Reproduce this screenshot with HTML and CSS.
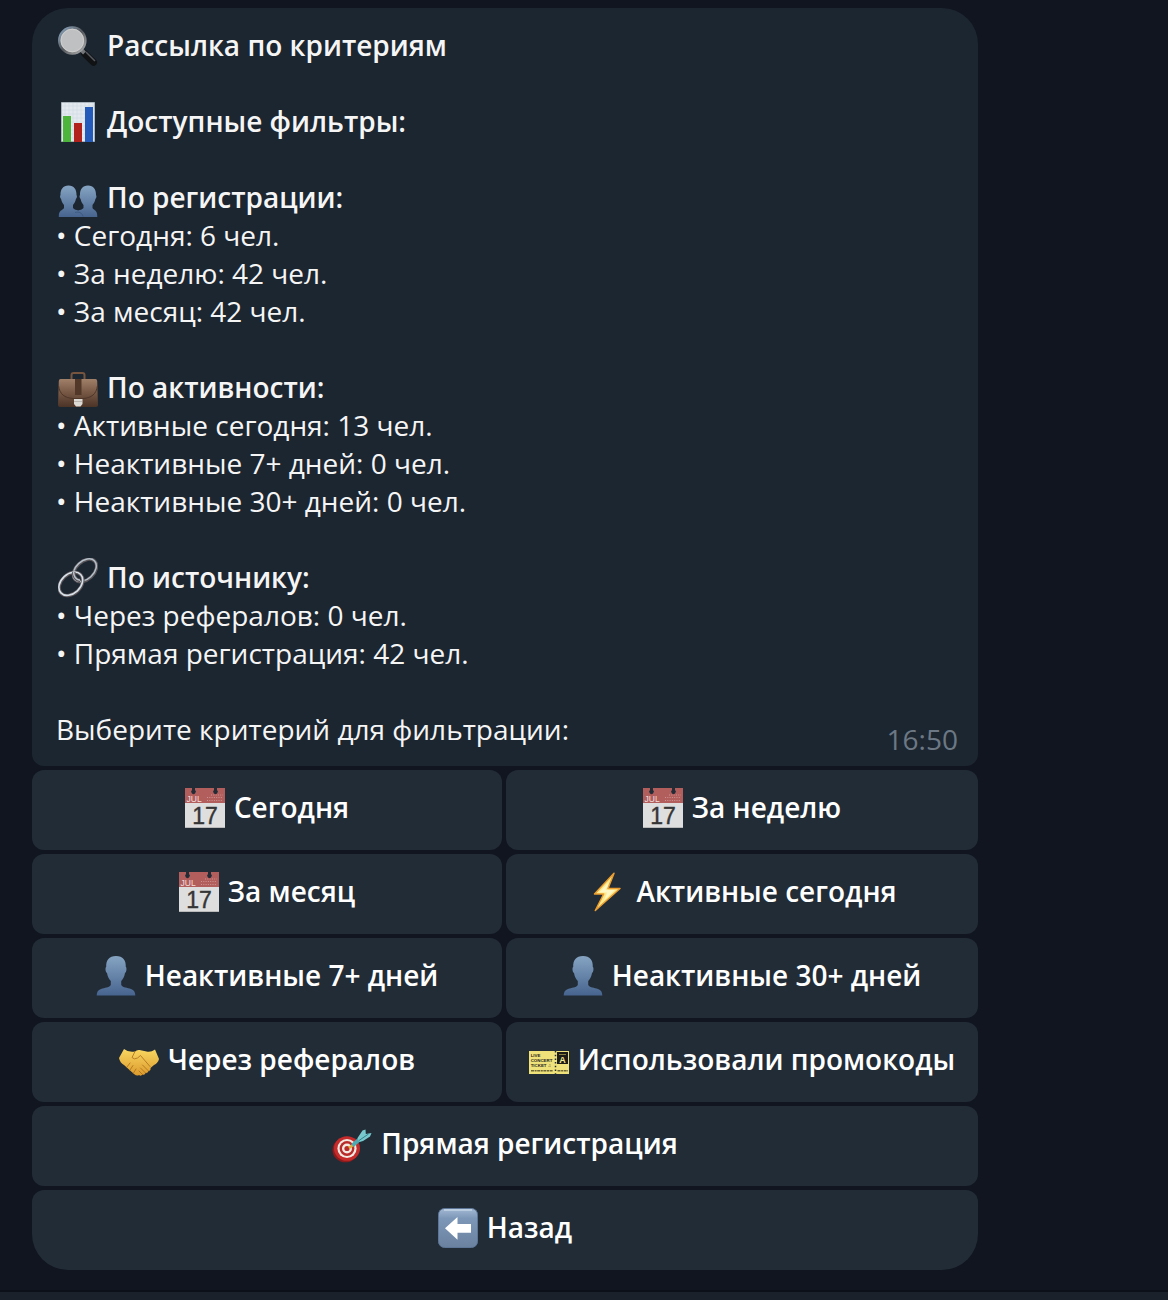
FILE: index.html
```html
<!DOCTYPE html>
<html lang="ru">
<head>
<meta charset="utf-8">
<meta name="viewport" content="width=device-width, initial-scale=1">
<title>Рассылка по критериям</title>
<link rel="stylesheet" href="styles.css">
</head>
<body>
<svg class="defs" aria-hidden="true">
  <defs>
    <linearGradient id="blue" x1="0" y1="0" x2="0" y2="1"><stop offset="0" stop-color="#86a4c2"/><stop offset="1" stop-color="#47648f"/></linearGradient>
    <linearGradient id="metal" x1="0" y1="0" x2="1" y2="1"><stop offset="0" stop-color="#8faac4"/><stop offset=".5" stop-color="#55585c"/><stop offset="1" stop-color="#b5b5b5"/></linearGradient>
    <linearGradient id="leather" x1="0" y1="0" x2="0" y2="1"><stop offset="0" stop-color="#a18069"/><stop offset=".5" stop-color="#765744"/><stop offset="1" stop-color="#4b3326"/></linearGradient>
    <linearGradient id="gold" x1="0" y1="0" x2="0" y2="1"><stop offset="0" stop-color="#f9d761"/><stop offset="1" stop-color="#dc9a2c"/></linearGradient>
    <linearGradient id="key" x1="0" y1="0" x2="0" y2="1"><stop offset="0" stop-color="#a4bad4"/><stop offset=".25" stop-color="#7d97b8"/><stop offset="1" stop-color="#6b829f"/></linearGradient>
    <symbol id="calendar" viewBox="0 0 40 40">
      <path fill="#dedede" d="M0 0h40v40H0z"/>
      <path fill="#b25e5d" d="M0 0h40v15H0z"/>
      <path fill="#222c37" d="M7 0h3v2a2.300 2.300 0 1 1-3 0zM29 0h3v2a2.300 2.300 0 1 1-3 0z"/>
      <text class="glyph" x="1.500" y="13.500" font-size="8.500" fill="#f3dede">JUL</text>
      <path stroke="#cf9492" stroke-width="1.200" stroke-dasharray="1 1.300" d="M22 9.500h16M22 12.500h16M26 7h12"/>
      <path stroke="#b9b9b9" d="M0 39.500h40"/>
      <text class="glyph" x="20" y="35.500" font-size="23" text-anchor="middle" fill="#353535" stroke="#353535" stroke-width=".4">17</text>
    </symbol>
    <symbol id="person" viewBox="0 0 40 40">
      <path fill="url(#blue)" d="M20 0c7 0 10 4 9.800 11 1 0 1 5-.8 6-.7 4-2 6-3.800 8v4c2 3 6 2.500 9.800 4 3 1.200 4.200 3 4.300 6.400H.7C.8 36 2 34.200 5 33c3.800-1.500 7.800-1 9.800-4v-4C13 23 11.700 21 11 17c-1.800-1-1.800-6-.8-6C10 4 13 0 20 0z"/>
    </symbol>
  </defs>
</svg>

<main class="chat">
  <article class="message">
    <h1 class="heading">
      <svg class="icon" viewBox="0 0 40 40" aria-hidden="true"><path d="M26.500 27.500l9 8.700" stroke="#111214" stroke-width="7" stroke-linecap="round"/><path d="M28 26l9 9" stroke="#56595d" stroke-width="1.500"/><path d="M23.500 24l3 3" stroke="#74777a" stroke-width="4"/><circle cx="14.300" cy="14.500" r="13" fill="#bfc0c2" stroke="url(#metal)" stroke-width="2.600"/><circle cx="14.300" cy="14.500" r="11.300" fill="none" stroke="#d4d3d1" stroke-width=".8"/></svg>
      Рассылка по критериям
    </h1>

    <h2 class="heading spaced">
      <svg class="icon" viewBox="0 0 40 40" aria-hidden="true"><path fill="#e3e9ef" stroke="#a9b4bd" stroke-width="1" d="M3.500.5h33v39h-33z"/><path stroke="#cbd4de" stroke-width=".5" d="M7 1v38M11 1v38M15 1v38M19 1v38M23 1v38M27 1v38M31 1v38M35 1v38M4 4h32M4 8h32M4 12h32M4 16h32M4 20h32M4 24h32M4 28h32M4 32h32M4 36h32"/><path fill="#4db53b" d="M5 14h8v26H5z"/><path fill="#b2221c" d="M16 21h8v19h-8z"/><path fill="#245bbb" d="M27 5h8v35h-8z"/></svg>
      Доступные фильтры:
    </h2>

    <section class="spaced">
      <h2 class="heading">
        <svg class="icon" viewBox="0 0 40 40" aria-hidden="true"><path fill="url(#blue)" d="M10.500 7.500c5.500 0 8.200 4 8 9.500.8 1 .5 3-.6 4-.6 3-1.600 4-2.900 6v3c1.300 1.800 3.200 1.800 5.200 2.600 2-.8 3.900-.8 5.300-2.600v-3c-1.300-2-2.300-3-2.900-6-1.100-1-1.400-3-.6-4-.2-5.500 2.500-9.500 8-9.500s8.200 4 8 9.500c.8 1 .5 3-.6 4-.6 3-1.600 4-2.900 6v3c1.800 3 4.800 1.500 4.800 9H.8c0-7.500 3.400-6 5.200-9v-3c-1.300-2-2.300-3-2.900-6-1.100-1-1.400-3-.6-4-.2-5.500 2.500-9.500 8-9.500z"/><path fill="none" stroke="#35517a" stroke-width=".7" d="M17 34.500c4-1 7 0 8 4"/></svg>
        По регистрации:
      </h2>
      <ul class="stats">
        <li>• Сегодня: 6 чел.</li>
        <li>• За неделю: 42 чел.</li>
        <li>• За месяц: 42 чел.</li>
      </ul>
    </section>

    <section class="spaced">
      <h2 class="heading">
        <svg class="icon" viewBox="0 0 40 40" aria-hidden="true"><path fill="none" stroke="#76543e" stroke-width="2" d="M13.500 11V7q0-2 2-2h9q2 0 2 2v4"/><path fill="url(#leather)" d="M2.500 11h35Q39 11 39.200 13L40 37q0 2-2 2H2q-2 0-2-2L.8 13Q1 11 2.500 11z"/><path fill="none" stroke="#4e3628" stroke-width="1" d="M.6 18c1 8 6 12 14.400 12.500h10c8.400-.5 13.400-4.500 14.400-12.500"/><path fill="#513829" d="M17 11h6.500v16H17z"/><path fill="#ddd9d4" d="M16 31h8.500v5l-2 2.500h-4.500l-2-2.500z"/><path stroke="#98918a" stroke-width=".5" d="M16 33.500h8.500"/></svg>
        По активности:
      </h2>
      <ul class="stats">
        <li>• Активные сегодня: 13 чел.</li>
        <li>• Неактивные 7+ дней: 0 чел.</li>
        <li>• Неактивные 30+ дней: 0 чел.</li>
      </ul>
    </section>

    <section class="spaced">
      <h2 class="heading">
        <svg class="icon" viewBox="0 0 40 40" aria-hidden="true"><g fill="none"><ellipse cx="27" cy="12.500" rx="13.500" ry="9" transform="rotate(-43 27 12.500)" stroke="#5a5558" stroke-width="3.400"/><ellipse cx="26.700" cy="12.200" rx="13.500" ry="9" transform="rotate(-43 26.700 12.200)" stroke="#b4bfca" stroke-width="1.500"/><ellipse cx="13" cy="26" rx="13.500" ry="9.700" transform="rotate(-43 13 26)" stroke="#5d5659" stroke-width="3.400"/><ellipse cx="12.800" cy="25.700" rx="13.500" ry="9.700" transform="rotate(-43 12.800 25.700)" stroke="#d7e1e9" stroke-width="1.600"/><path d="M15.700 14q.2 8 6.500 8.500" stroke="#5a5558" stroke-width="3.400"/><path d="M15.500 13.500q.3 8 6.500 8.700" stroke="#b9c3ce" stroke-width="1.500"/></g></svg>
        По источнику:
      </h2>
      <ul class="stats">
        <li>• Через рефералов: 0 чел.</li>
        <li>• Прямая регистрация: 42 чел.</li>
      </ul>
    </section>

    <footer class="closing spaced">
      <p>Выберите критерий для фильтрации:</p>
      <time class="time" datetime="16:50">16:50</time>
    </footer>
  </article>

  <div class="keyboard">
    <button class="key" type="button"><svg class="icon" aria-hidden="true"><use href="#calendar"/></svg>Сегодня</button>
    <button class="key" type="button"><svg class="icon" aria-hidden="true"><use href="#calendar"/></svg>За неделю</button>
    <button class="key" type="button"><svg class="icon" aria-hidden="true"><use href="#calendar"/></svg>За месяц</button>
    <button class="key" type="button"><svg class="icon" viewBox="0 0 40 40" aria-hidden="true"><path fill="#fde98a" stroke="#ea9c2e" stroke-width="1.500" stroke-linejoin="round" d="M27 1.300L7.500 22h9.200L8.300 38.500 33 16.500H21z"/><path fill="#fff8c4" d="M22 10L12 20.500h8l-3 8L28 18h-9z"/></svg>Активные сегодня</button>
    <button class="key" type="button"><svg class="icon" aria-hidden="true"><use href="#person"/></svg>Неактивные 7+ дней</button>
    <button class="key" type="button"><svg class="icon" aria-hidden="true"><use href="#person"/></svg>Неактивные 30+ дней</button>
    <button class="key" type="button"><svg class="icon" viewBox="0 0 40 40" aria-hidden="true"><path fill="url(#gold)" d="M5 9L0 18q1 5 5 7l10 9q3 2.500 5 1 2 1.500 3.500-.5 2.500.8 3-1.500 2.500.3 3-2 2.500-.5 2-3l3.500-3q4-2 5-6L36 9.500q-4 3-8.500 2l-7-1.500q-2.500-.5-4.500 1.500Q9 12.500 5 9z"/><path fill="none" stroke="#a86d1c" stroke-width=".8" stroke-linecap="round" d="M16 11.500l-3 6q2 2.500 5.500.5l3-2.500L31 26.500M23.500 34.500L20 31M26.500 33l-5-5M29.500 31l-6-6M8 27l3-4M11 30l3-4.500M14.500 33l2.500-4"/></svg>Через рефералов</button>
    <button class="key" type="button"><svg class="icon" viewBox="0 0 40 40" aria-hidden="true"><path fill="#f0e27b" d="M0 11h40v23H0z"/><path fill="#1d1c17" d="M28 12h11v12H28z"/><path stroke="#26312f" stroke-width="1.500" stroke-dasharray="1.500 2.200" d="M26.500 11v23"/><g class="glyph bold" font-size="4.400" fill="#25231a"><text x="1.700" y="16.500">LIVE</text><text x="1.700" y="21.500">CONCERT</text><text x="1.700" y="26.500">TICKET ♫</text></g><text class="glyph bold" x="33.500" y="23.200" font-size="9" text-anchor="middle" fill="#f5e990">A</text><path stroke="#898044" d="M30 14.500h7"/><path stroke="#6d6736" stroke-width="1.500" stroke-dasharray="3 .6 2 .6" d="M2 30.800h22M28.500 30.800H39"/></svg>Использовали промокоды</button>
    <button class="key wide" type="button"><svg class="icon" viewBox="0 0 40 40" aria-hidden="true"><ellipse cx="13.500" cy="26" rx="13" ry="12.300" fill="#8e1b1c"/><ellipse cx="15" cy="24.500" rx="13" ry="12.300" fill="#c52b2a"/><circle cx="15" cy="24.500" r="9.600" fill="#f2e9e3"/><circle cx="15" cy="24.500" r="7.400" fill="#b92b2a"/><circle cx="15" cy="24.500" r="5" fill="#f2e9e3"/><circle cx="15" cy="24.500" r="2.600" fill="#b92b2a"/><path stroke="#dfad35" stroke-width="2.500" d="M17 24l4-3"/><path stroke="#4da9b2" stroke-width="4" d="M20.500 21.500l9-8"/><path fill="#78c9cd" d="M25.500 14l5-7.500 3-1 .3 4.500 5.700-1-1.500 3.500-7 4.500-3.500 1z"/><path stroke="#337e8b" d="M27 16.500l9.500-6.500"/></svg>Прямая регистрация</button>
    <button class="key wide" type="button"><svg class="icon" viewBox="0 0 40 40" aria-hidden="true"><rect x=".5" y=".5" width="39" height="39" rx="6" fill="url(#key)" stroke="#5d7697"/><path stroke="#c3d4e6" stroke-width="1.500" d="M6 2h28"/><path fill="#fff" d="M7 20.200L19.500 9v7H33v8.700H19.500v7z"/></svg>Назад</button>
  </div>
</main>
<div class="composer"></div>
</body>
</html>
```
FILE: styles.css
```css
* {
  box-sizing: border-box;
}

body {
  display: flex;
  flex-direction: column;
  min-height: 100vh;
  margin: 0;
  background: #10151f;
  color: #f5f5f5;
  font-family: "Open Sans", "Noto Sans", sans-serif;
  font-size: 28px;
  line-height: 38px;
}

h1,
h2,
p,
ul {
  margin: 0;
  padding: 0;
}

.defs {
  position: absolute;
  width: 0;
  height: 0;
}

.chat {
  flex: 1;
  display: flex;
  flex-direction: column;
  gap: 4px;
  padding: 8px 190px 20px 32px;
}

.message {
  padding: 18px 20px 18px 24px;
  border-radius: 36px 36px 12px 12px;
  background: #1c2631;
}

.spaced {
  margin-top: 38px;
}

.heading {
  display: flex;
  align-items: center;
  gap: 9px;
  height: 38px;
  padding-left: 2px;
  font-size: 28px;
  font-weight: 600;
}

.icon {
  flex: none;
  width: 40px;
  height: 40px;
  margin-top: 2px;
}

.glyph {
  font-family: "Liberation Sans", Arial, sans-serif;
  font-weight: 400;
}

.bold {
  font-weight: 700;
}

.stats {
  list-style: none;
}

.closing {
  display: flex;
  justify-content: space-between;
  gap: 16px;
}

.time {
  align-self: flex-end;
  padding-top: 10px;
  margin-bottom: -10px;
  color: #6c7884;
}

.keyboard {
  display: grid;
  grid-template-columns: 470fr 472fr;
  gap: 4px;
}

.key {
  display: flex;
  align-items: center;
  justify-content: center;
  gap: 9px;
  min-height: 80px;
  padding: 0 6px 6px;
  border: 0;
  border-radius: 12px;
  background: #222c37;
  color: #fff;
  font: inherit;
  font-weight: 600;
  cursor: pointer;
}

.wide {
  grid-column: 1 / -1;
}

.key:last-child {
  border-radius: 12px 12px 36px 36px;
}

.composer {
  height: 10px;
  border-top: 2px solid #0b1019;
  background: #1a212a;
}
```
